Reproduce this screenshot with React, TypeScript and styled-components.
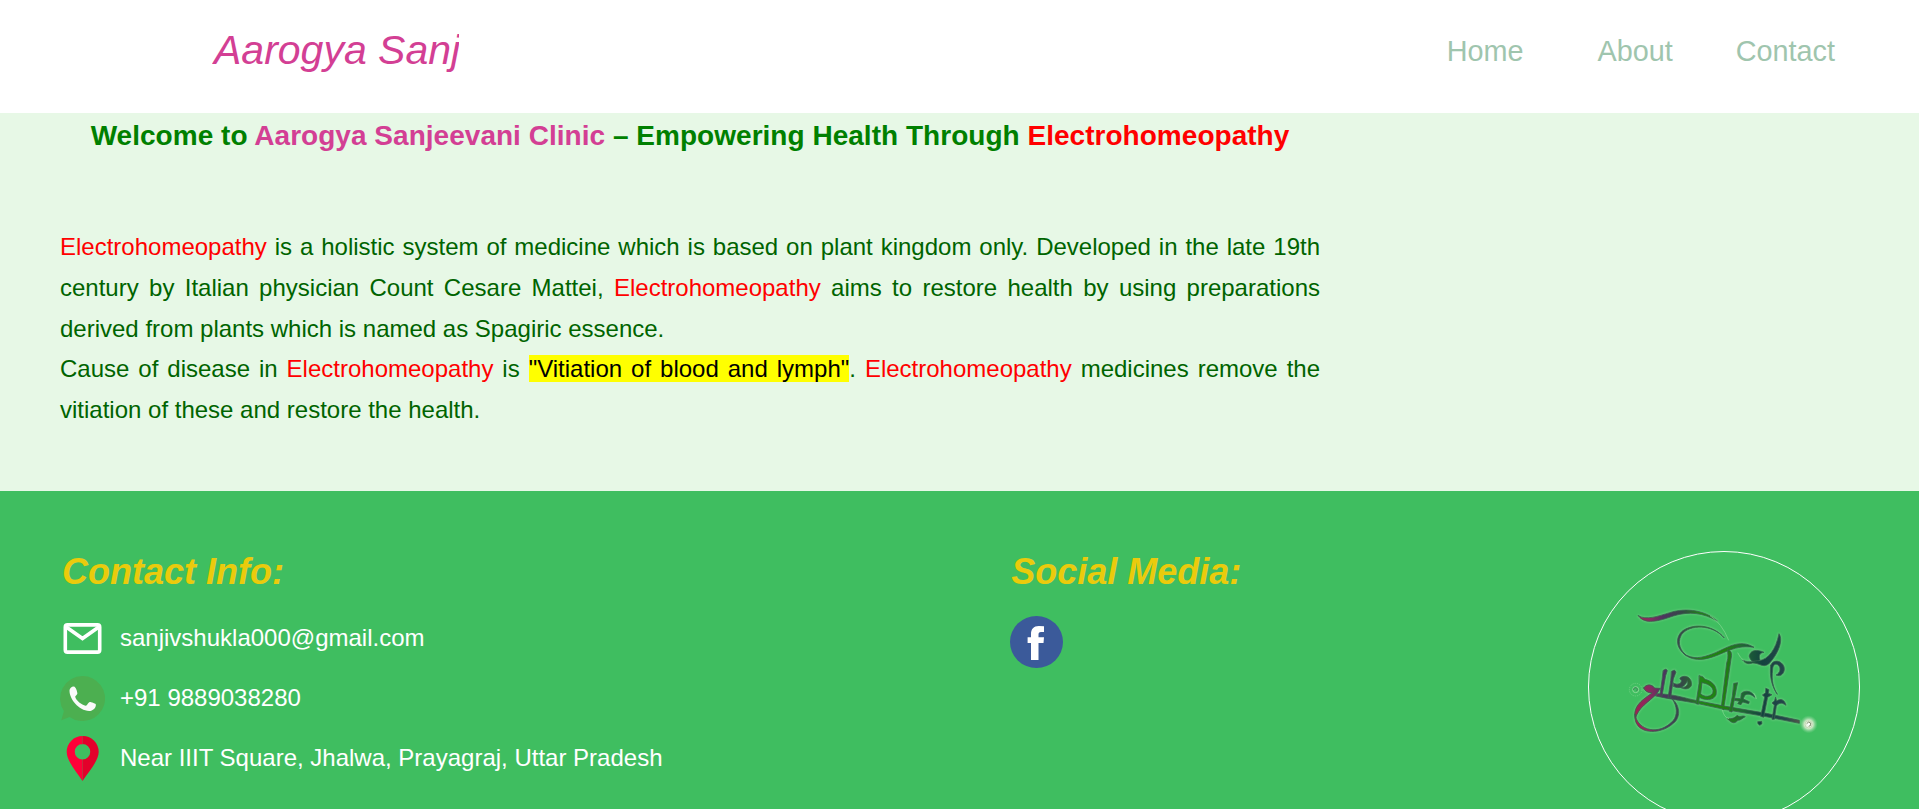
import React from "react";
import styled, { createGlobalStyle } from "styled-components";

const GlobalStyle = createGlobalStyle`
  * { box-sizing: border-box; margin: 0; padding: 0; }
  html, body { height: 100%; overflow: hidden; }
  body { font-family: Arial, "Liberation Sans", sans-serif; background: #fff; }
`;

const Header = styled.header`
  display: flex;
  justify-content: space-between;
  align-items: center;
  height: 113px;
  padding: 0 84px 12px 212px;
  background: #fff;
`;

const Brand = styled.div`
  width: 247px;
  padding-left: 2px;
  overflow: hidden;
  white-space: nowrap;
  font-size: 41px;
  font-style: italic;
  line-height: 48px;
  padding-bottom: 2px;
  color: #d33f94;
`;

const Nav = styled.nav`
  display: flex;
  gap: 74px;
`;

const NavLink = styled.a<{ $shift?: number }>`
  font-size: 28.8px;
  line-height: 34px;
  margin-left: ${(p) => p.$shift ?? 0}px;
  color: #9fc5ae;
  text-decoration: none;
`;

const Intro = styled.main`
  height: 378px;
  padding-left: 60px;
  background: #e7f8e6;
`;

const IntroColumn = styled.div`
  width: 1260px;
`;

const Title = styled.h1`
  padding-top: 7px;
  margin-bottom: 75px;
  text-align: center;
  font-size: 28px;
  line-height: 32px;
  letter-spacing: 0.027px;
  white-space: nowrap;
  color: #008000;
`;

const BrandName = styled.span`
  color: #d33f94;
`;

const Term = styled.span`
  color: #ff0000;
`;

const Highlight = styled.mark`
  background: #ffff00;
  color: #000;
`;

const Paragraph = styled.p`
  font-size: 24px;
  line-height: 40.8px;
  text-align: justify;
  color: #006400;
`;

const Footer = styled.footer`
  display: flex;
  justify-content: space-between;
  align-items: flex-start;
  height: 318px;
  padding: 60px 59px 0 60px;
  overflow: hidden;
  background: #3fbe60;
`;

const FooterTitle = styled.h2`
  margin-bottom: 24px;
  padding-left: 2px;
  font-size: 36px;
  font-style: italic;
  line-height: 41px;
  color: #eacb0c;
`;

const ContactList = styled.ul`
  display: grid;
  gap: 15px;
  list-style: none;
`;

const ContactItem = styled.li`
  display: flex;
  align-items: center;
  gap: 15px;
  height: 45px;
  font-size: 24px;
  color: #fff;
`;

const ContactText = styled.span`
  line-height: 27px;
  padding-bottom: 2px;
`;

const ContactIcon = styled.svg`
  width: 45px;
  height: 45px;
`;

const SocialIcon = styled.svg`
  display: block;
  width: 53px;
  height: 52px;
  margin-left: 1px;
`;

const Seal = styled.div`
  width: 272px;
  height: 272px;
  border: 1px solid #fff;
  border-radius: 50%;
`;

const SealArt = styled.svg`
  display: block;
  width: 270px;
  height: 270px;
`;

const MailIcon = () => (
  <ContactIcon viewBox="0 0 45 45">
    <rect x="5.3" y="8.9" width="34.4" height="27.2" rx="2.2" fill="none" stroke="#fff" strokeWidth="3.6" />
    <path d="M5.5 10.5 22.5 22.4 39.5 10.5" fill="none" stroke="#fff" strokeWidth="3.7" />
  </ContactIcon>
);

const PhoneIcon = () => (
  <ContactIcon viewBox="0 0 45 45">
    <path d="M22.5 0A22.5 22.5 0 1 1 9.6 40.9L1.3 44.2 3.9 35A22.5 22.5 0 0 1 22.5 0Z" fill="#4caf50" />
    <path
      d="M9.5 14.5C9.6 12.2 11.6 10.4 13.9 10.5C15.8 10.7 17.2 15.4 17.4 17.2C17.5 18.6 15.3 19.9 15.2 20.8C16 24.5 21.8 29.2 25.6 29.8C27 29.8 28.3 26.2 29.8 26C31.3 26 35 27.4 35.8 28.2C36.5 31.6 32.7 35 29.2 35C18.6 34.5 9.5 23.3 9.5 14.5Z"
      fill="#fafafa"
    />
  </ContactIcon>
);

const PinIcon = () => (
  <ContactIcon viewBox="0 0 45 45">
    <path fillRule="evenodd" d="M22.5 0A15.8 15.8 0 0 0 6.7 15.8C6.7 25 16 35 22.5 45ZM22.5 8.1V23.6A7.75 7.75 0 0 1 22.5 8.1Z" fill="#ff0038" />
    <path fillRule="evenodd" d="M22.5 0A15.8 15.8 0 0 1 38.7 15.8C38.7 25 29 35 22.5 45ZM22.5 8.1V23.6A7.75 7.75 0 0 0 22.5 8.1Z" fill="#e3002b" />
  </ContactIcon>
);

const FacebookIcon = () => (
  <SocialIcon viewBox="0 0 53 52">
    <ellipse cx="26.5" cy="26" rx="26.5" ry="26" fill="#3b5a9a" />
    <path d="M34 10.2V16H31C29 16 28.5 17 28.5 18.8V21.3H34L33.5 27H28.5V44H21V27H17.6V21.3H21V18C21 13 23.7 10 28.8 10Z" fill="#fff" />
  </SocialIcon>
);

/* Calligraphic emblem: tapered ribbons along a slanted staff. */
const Emblem = () => (
  <SealArt viewBox="-63 -114 810 810">
    <defs>
      <linearGradient id="ink" gradientUnits="userSpaceOnUse" x1="70" y1="0" x2="600" y2="0">
        <stop offset="0" stopColor="#a0204f" />
        <stop offset="0.09" stopColor="#8a2a60" />
        <stop offset="0.17" stopColor="#4d355f" />
        <stop offset="0.28" stopColor="#344a46" />
        <stop offset="0.38" stopColor="#208516" />
        <stop offset="0.52" stopColor="#20800f" />
        <stop offset="0.61" stopColor="#206b32" />
        <stop offset="0.73" stopColor="#14423f" />
        <stop offset="0.86" stopColor="#24464a" />
        <stop offset="1" stopColor="#746348" />
      </linearGradient>
      <radialGradient id="jewel">
        <stop offset="0" stopColor="#fff" />
        <stop offset="0.45" stopColor="#d8edce" />
        <stop offset="1" stopColor="#84d295" stopOpacity="0" />
      </radialGradient>
      <filter id="halo" x="-10%" y="-10%" width="120%" height="120%">
        <feGaussianBlur stdDeviation="3" />
      </filter>
      <g id="ribbons" strokeLinecap="round" strokeLinejoin="round">
        {/* upper pennant */}
        <path d="M85 77C109 92 145 78 179 68C231 51 288 63 322 93C282 69 237 63 190 78C145 94 104 105 85 77Z" />
        {/* wide loop and its crossing stroke */}
        <path d="M342 143C309 103 238 101 214 135C200 161 213 184 231 198C192 173 198 136 220 121C260 96 315 110 342 143Z" />
        <path d="M220 190C249 211 277 203 309 191C351 174 388 145 432 172C397 167 374 174 347 185C299 207 254 222 220 190Z" />
        <path d="M353 180C364 181 367 190 363 207L345 331L340 360L334 350L350 219C357 201 352 188 353 180Z" />
        {/* right flourish */}
        <path d="M418 198C420 180 440 177 462 187C447 189 446 199 450 209C439 221 420 217 418 198Z" />
        <path d="M399 211C421 221 432 211 448 212C475 207 497 180 507 131C522 152 501 197 476 222C458 235 447 218 428 219C414 223 406 221 399 211Z" />
        <path d="M482 226C488 208 514 209 522 230C527 247 513 263 498 255C511 249 514 233 504 225C497 219 488 224 488 239C484 272 489 292 502 313C486 291 478 260 482 226Z" />
        {/* slanted staff */}
        <path d="M143 311C193 312 225 325 262 332L347 349L470 370L568 391V400L462 379L342 358L260 340C219 332 180 328 137 318Z" />
        {/* lower-left curl */}
        <path d="M101 294C108 282 125 281 134 294L151 295L141 311C116 337 85 351 76 387C66 346 103 326 126 309C114 309 104 303 101 294Z" />
        <path d="M75 373C83 423 149 438 190 391C202 376 203 350 186 326C213 348 211 385 190 400C149 438 68 434 75 373Z" />
        {/* uprights */}
        <path d="M160 241L168 237L172 242L167 257L156 319L149 319L156 270Z" />
        <path d="M185 244L193 240L198 246L190 267L182 324L174 324L182 272Z" />
        <path d="M190 279C204 287 216 280 214 270C205 267 211 259 224 259C238 259 247 273 244 287C236 301 219 297 210 292C227 295 237 284 232 272C226 290 207 299 190 289Z" />
        <path fillRule="evenodd" d="M268 257L278 260L285 268C311 274 323 293 318 315C310 333 283 331 268 322L265 343L258 341L267 281ZM276 278L272 312C290 326 311 317 309 301C307 289 293 281 276 278Z" />
        <path d="M372 280L383 278L380 291L366 366L358 364L367 318Z" />
        <path d="M376 325L392 326L394 310C405 299 427 302 435 322C419 309 406 310 402 321L400 327L418 335L416 341L398 336L393 344L383 341L388 334L374 331Z" />
        <path d="M352 386Q373 388 381 376C390 384 398 374 406 380C397 384 393 391 384 391C371 405 363 396 352 386Z" />
        <path d="M468 295L477 299L475 310L486 314L473 322L461 382L452 379L464 321L457 315L466 309Z" />
        <path d="M497 322L500 333C512 323 525 330 528 346C514 335 504 340 499 349L493 388H486L493 345L486 339L493 333Z" />
        <path d="M444 395L455 394L456 401L449 406L444 401Z" />
      </g>
    </defs>
    <use href="#ribbons" fill="#9bdaa2" stroke="#9bdaa2" strokeWidth="5" opacity="0.5" filter="url(#halo)" />
    <use href="#ribbons" fill="url(#ink)" stroke="#36624d" strokeWidth="2.4" />
    <g fill="none" stroke="#89d994">
      <circle cx="77" cy="299" r="19" strokeWidth="3" opacity="0.55" strokeDasharray="4 3" />
      <circle cx="77" cy="299" r="9" strokeWidth="3" />
      <path d="M70 300Q71 291 79 293Q85 297 80 303" stroke="#45665c" strokeWidth="2" />
      <path d="M300 77Q335 99 356 151M337 360Q342 382 357 386M383 188Q389 202 401 211M431 309Q438 318 439 327" strokeWidth="2" />
    </g>
    <circle cx="596" cy="403" r="27" fill="url(#jewel)" />
    <circle cx="596" cy="403" r="11" fill="none" stroke="#b6cca4" strokeWidth="2" />
    <path d="M590 401Q596 392 602 399Q605 408 596 409" fill="none" stroke="#6c7654" strokeWidth="2.5" />
  </SealArt>
);

export default function App() {
  return (
    <>
      <GlobalStyle />
      <Header>
        <Brand>Aarogya Sanj</Brand>
        <Nav>
          <NavLink>Home</NavLink>
          <NavLink>About</NavLink>
          <NavLink $shift={-11}>Contact</NavLink>
        </Nav>
      </Header>
      <Intro>
        <IntroColumn>
          <Title>
            Welcome to <BrandName>Aarogya Sanjeevani Clinic</BrandName> – Empowering Health Through{" "}
            <Term>Electrohomeopathy</Term>
          </Title>
          <Paragraph>
            <Term>Electrohomeopathy</Term> is a holistic system of medicine which is based on plant kingdom only.
            Developed in the late 19th century by Italian physician Count Cesare Mattei, <Term>Electrohomeopathy</Term>{" "}
            aims to restore health by using preparations derived from plants which is named as Spagiric essence.
            <br />
            Cause of disease in <Term>Electrohomeopathy</Term> is <Highlight>"Vitiation of blood and lymph"</Highlight>.{" "}
            <Term>Electrohomeopathy</Term> medicines remove the vitiation of these and restore the health.
          </Paragraph>
        </IntroColumn>
      </Intro>
      <Footer>
        <section>
          <FooterTitle>Contact Info:</FooterTitle>
          <ContactList>
            <ContactItem><MailIcon /><ContactText>sanjivshukla000@gmail.com</ContactText></ContactItem>
            <ContactItem><PhoneIcon /><ContactText>+91 9889038280</ContactText></ContactItem>
            <ContactItem><PinIcon /><ContactText>Near IIIT Square, Jhalwa, Prayagraj, Uttar Pradesh</ContactText></ContactItem>
          </ContactList>
        </section>
        <section>
          <FooterTitle>Social Media:</FooterTitle>
          <FacebookIcon />
        </section>
        <Seal><Emblem /></Seal>
      </Footer>
    </>
  );
}
